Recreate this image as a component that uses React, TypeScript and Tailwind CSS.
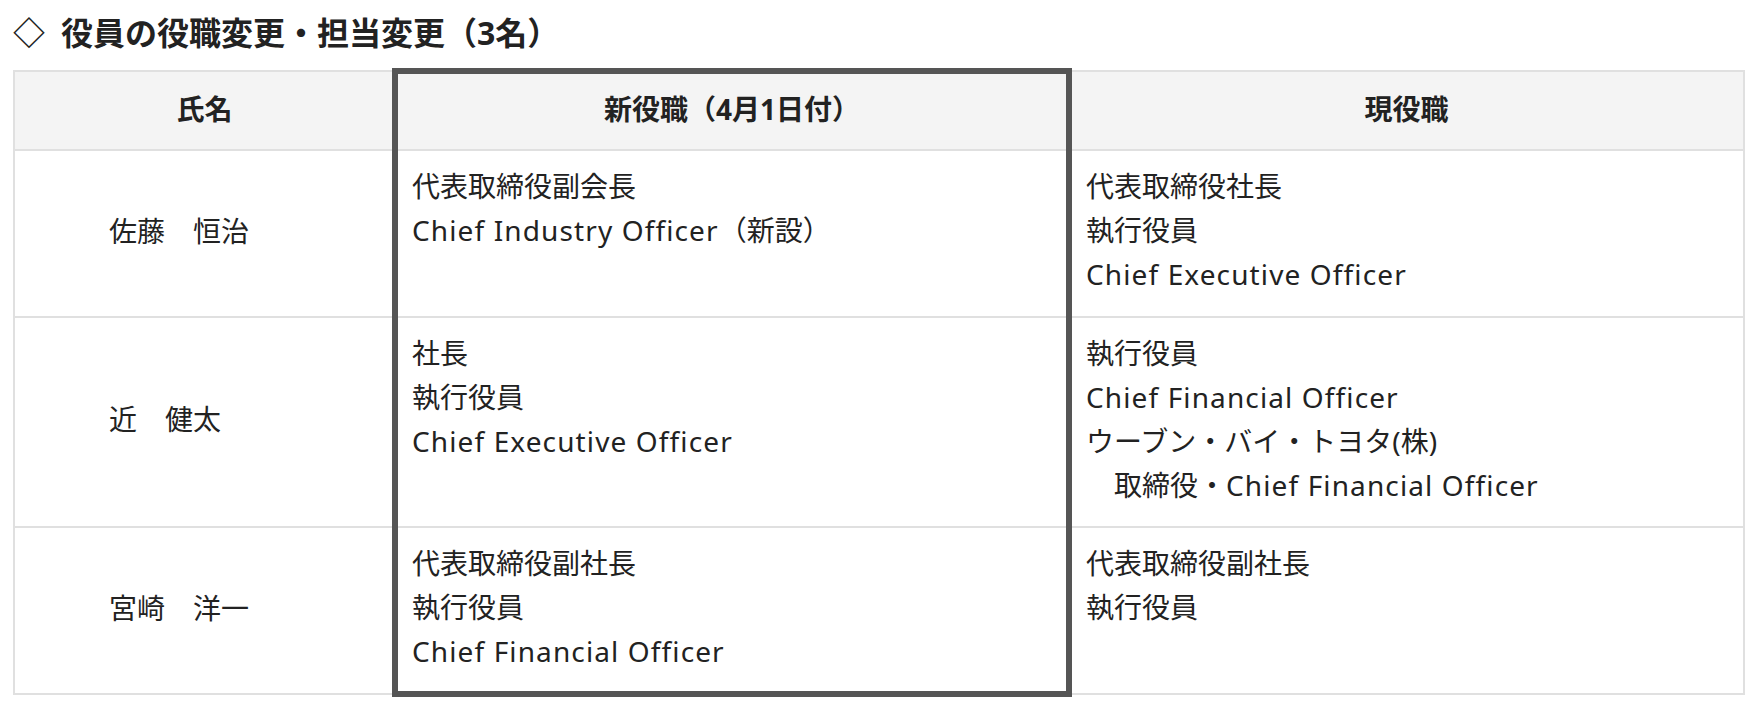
const rows = [
    {
        name: '佐藤　恒治',
        next: ['代表取締役副会長', 'Chief Industry Officer（新設）'],
        current: ['代表取締役社長', '執行役員', 'Chief Executive Officer'],
        h: 'h-[167px]'
    },
    {
        name: '近　健太',
        next: ['社長', '執行役員', 'Chief Executive Officer'],
        current: ['執行役員', 'Chief Financial Officer', 'ウーブン・バイ・トヨタ(株)', '　取締役・Chief Financial Officer'],
        h: 'h-[210px]'
    },
    {
        name: '宮崎　洋一',
        next: ['代表取締役副社長', '執行役員', 'Chief Financial Officer'],
        current: ['代表取締役副社長', '執行役員'],
        h: 'h-[167px]'
    }
]

const cell = 'border-r-2 border-b-2 border-[#e0e0e0]'

// latin runs get a little extra spacing so they sit as wide as the original
function Mixed({ text }: { text: string }) {
    const parts = text.split(/([A-Za-z][A-Za-z ]*[A-Za-z])/)
    return (
        <>
            {parts.map((p, i) =>
                /^[A-Za-z]/.test(p) ? (
                    <span key={i} className="tracking-[0.04em]">{p}</span>
                ) : (
                    <span key={i}>{p}</span>
                )
            )}
        </>
    )
}

function Lines({ items }: { items: string[] }) {
    return (
        <div className="flex flex-col">
            {items.map((t, i) => (
                <span key={i} className="leading-[44px] whitespace-pre">
                    <Mixed text={t} />
                </span>
            ))}
        </div>
    )
}

export default function App() {
    return (
        <div className="min-h-screen bg-white text-[#222] font-['Noto_Sans','Noto_Sans_CJK_JP',sans-serif]">
            {/* Title */}
            <div className="h-[70px] pl-[13px] pb-[5px] flex items-center">
                <h2 className="text-[32px] font-bold leading-none">
                    <span className="mr-[16px]">◇</span>役員の役職変更・担当変更（3名）
                </h2>
            </div>

            {/* Table */}
            <div className="relative ml-[13px] w-[1732px]">
                <div className="grid grid-cols-[381px_674px_675px] border-l-2 border-t-2 border-[#e0e0e0] text-[28px]">
                    <div className={`${cell} h-[79px] pb-[4px] bg-[#f4f4f4] flex items-center justify-center font-bold`}>氏名</div>
                    <div className={`${cell} h-[79px] pb-[4px] bg-[#f4f4f4] flex items-center justify-center font-bold`}>新役職（4月1日付）</div>
                    <div className={`${cell} h-[79px] pb-[4px] bg-[#f4f4f4] flex items-center justify-center font-bold`}>現役職</div>

                    {rows.map((r, i) => (
                        <div key={i} className="contents">
                            <div className={`${cell} ${r.h} flex items-center pl-[94px] pb-[6px]`}>
                                <span className="whitespace-pre">{r.name}</span>
                            </div>
                            <div className={`${cell} ${r.h} px-4 pt-[13px]`}>
                                <Lines items={r.next} />
                            </div>
                            <div className={`${cell} ${r.h} px-4 pt-[13px]`}>
                                <Lines items={r.current} />
                            </div>
                        </div>
                    ))}
                </div>

                {/* highlight frame around the new-position column */}
                <div className="absolute left-[379px] top-[-2px] w-[680px] h-[629px] border-[6px] border-[#555] pointer-events-none" />
            </div>
        </div>
    )
}
